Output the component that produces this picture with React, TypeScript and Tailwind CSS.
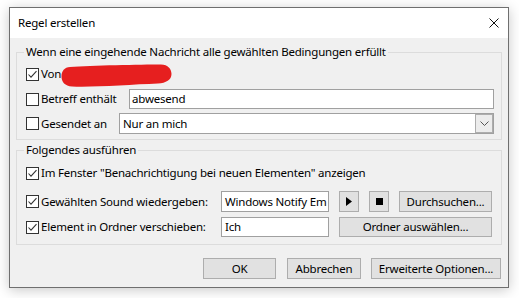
import React from 'react';

const Check = ({ checked }: { checked?: boolean }) => (
  <span className="w-[13px] h-[13px] border border-[#333333] bg-white flex items-center justify-center shrink-0">
    {checked && (
      <svg width="11" height="11" viewBox="0 0 11 11">
        <path d="M1.5 5.5 L4 8.2 L9.5 2.2" fill="none" stroke="#333333" strokeWidth="1.1" />
      </svg>
    )}
  </span>
);

const Button = ({ className, children }: { className: string; children: React.ReactNode }) => (
  <div className={`border border-[#adadad] bg-[#e1e1e1] flex items-center justify-center shrink-0 ${className}`}>
    {children}
  </div>
);

const App = () => {
  return (
    <div
      className="w-[519px] h-[298px] bg-white relative pl-[9px] pt-[7px] text-[11.5px] tracking-[-0.2px] leading-4 text-black"
      style={{ fontFamily: '"Noto Sans", sans-serif' }}
    >
      <div className="w-[500px] h-[281px] border border-[#6f6f6f] bg-[#f0f0f0] shadow-[0_2px_12px_rgba(0,0,0,0.22)] flex flex-col">
        {/* title bar */}
        <div className="h-[30px] bg-white flex items-center justify-between pl-2 pr-[9px] shrink-0">
          <span>Regel erstellen</span>
          <svg width="10" height="10" viewBox="0 0 10 10">
            <path d="M0.5 0.5 L9.5 9.5 M9.5 0.5 L0.5 9.5" stroke="#111" strokeWidth="1" />
          </svg>
        </div>

        <div className="px-[6px] pt-[6px] flex flex-col">
          <fieldset className="border border-[#dcdcdc]">
            <legend className="ml-[7px] px-[2px] leading-4">
              Wenn eine eingehende Nachricht alle gewählten Bedingungen erfüllt
            </legend>
            <div className="pl-[9px] pr-[7px] pt-[4px] pb-[5px] flex flex-col">
              <div className="h-5 flex items-center gap-[2px]">
                <Check checked />
                <span>Von</span>
              </div>
              <div className="h-5 mt-[5px] flex items-center">
                <div className="w-[103px] flex items-center gap-[2px]">
                  <Check />
                  <span>Betreff enthält</span>
                </div>
                <div className="flex-1 h-full border border-[#a0a0a0] bg-white pl-[2px] flex items-center">
                  abwesend
                </div>
              </div>
              <div className="h-[21px] mt-1 flex items-center">
                <div className="w-[93px] flex items-center gap-[2px]">
                  <Check />
                  <span>Gesendet an</span>
                </div>
                <div className="flex-1 h-full border border-[#a0a0a0] bg-white pl-[3px] flex items-center justify-between">
                  <span>Nur an mich</span>
                  <div className="w-[18px] h-[19px] border border-[#adadad] bg-[#ececec] flex items-center justify-center">
                    <svg width="9" height="5" viewBox="0 0 9 5">
                      <path d="M0.5 0.5 L4.5 4.5 L8.5 0.5" fill="none" stroke="#555" strokeWidth="1" />
                    </svg>
                  </div>
                </div>
              </div>
            </div>
          </fieldset>

          <fieldset className="border border-[#dcdcdc] mt-[2px]">
            <legend className="ml-[7px] px-[2px] leading-4">Folgendes ausführen</legend>
            <div className="pl-[9px] pr-[7px] pt-[5px] pb-[7px] flex flex-col">
              <div className="h-5 flex items-center gap-[2px]">
                <Check checked />
                <span>Im Fenster "Benachrichtigung bei neuen Elementen" anzeigen</span>
              </div>
              <div className="h-[21px] mt-2 flex items-center">
                <div className="w-[195px] flex items-center gap-[2px]">
                  <Check checked />
                  <span>Gewählten Sound wiedergeben:</span>
                </div>
                <div className="w-[108px] h-full border border-[#a0a0a0] bg-white pl-[3px] flex items-center overflow-hidden whitespace-nowrap">
                  Windows Notify Em
                </div>
                <Button className="w-[20px] h-full ml-[10px]">
                  <svg width="6" height="9" viewBox="0 0 6 9">
                    <path d="M0 0 L6 4.5 L0 9 Z" fill="#000" />
                  </svg>
                </Button>
                <Button className="w-[20px] h-full ml-[10px]">
                  <span className="w-[7px] h-[7px] bg-black" />
                </Button>
                <Button className="w-[93px] h-full ml-[10px]">Durchsuchen...</Button>
              </div>
              <div className="h-5 mt-[5px] flex items-center">
                <div className="w-[195px] flex items-center gap-[2px]">
                  <Check checked />
                  <span>Element in Ordner verschieben:</span>
                </div>
                <div className="w-[108px] h-full border border-[#a0a0a0] bg-white pl-[3px] flex items-center">
                  Ich
                </div>
                <Button className="w-[153px] h-full ml-[10px]">Ordner auswählen...</Button>
              </div>
            </div>
          </fieldset>

          <div className="mt-[13px] pr-px flex justify-end">
            <Button className="w-[73px] h-[21px]">OK</Button>
            <Button className="w-[74px] h-[21px] ml-[11px]">Abbrechen</Button>
            <Button className="w-[130px] h-[21px] ml-[10px]">Erweiterte Optionen...</Button>
          </div>
        </div>
      </div>

      {/* red redaction scribble */}
      <svg className="absolute left-[61px] top-[64px]" width="111" height="24" viewBox="0 0 111 24">
        <path
          d="M9 3 C30 1.5 80 0.5 100 0.5 C107 0.5 110.5 5 110.5 10 C110.5 16 105 19 97 19.5 C70 20.5 32 23.5 11 22.5 C4 22 0.5 18 0.5 12.5 C0.5 7 3.5 3.3 9 3 Z"
          fill="#e61f1f"
        />
      </svg>
    </div>
  );
};

export default App;
